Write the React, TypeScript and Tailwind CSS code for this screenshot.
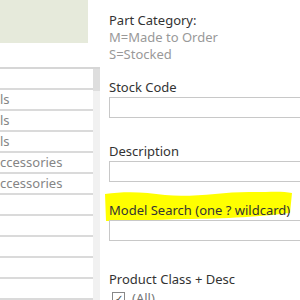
import React from 'react';

const rows = ['', 'ls', 'ls', 'ls', 'ccessories', 'ccessories', '', '', '', '', ''];

const Field = ({ label, top }: { label: string; top: string }) => (
  <div className={top}>
    <div className="text-[13px] leading-[18px] text-[#333]">{label}</div>
    <div className="mt-[1px] h-[21px] w-[220px] border border-[#c8c8c8] bg-white" />
  </div>
);

const App = () => {
  return (
    <div
      className="flex h-[300px] w-[300px] overflow-hidden bg-white"
      style={{ fontFamily: '"Noto Sans", "Open Sans", sans-serif' }}
    >
      {/* Left list */}
      <div className="flex w-[100px] shrink-0 flex-col">
        <div className="h-[44px] w-[88px] bg-[#e6eadb]" />
        <div className="mt-[24px] flex flex-1 border-t-2 border-[#d6d6d6]">
          <div className="flex-1">
            {rows.map((r, i) => (
              <div
                key={i}
                className="h-[21px] overflow-hidden whitespace-nowrap border-b-2 border-[#dadada] text-[13px] leading-[19px] text-[#858585]"
              >
                {r}
              </div>
            ))}
          </div>
          <div className="w-[7px] bg-[#f1f1f1]">
            <div className="h-[22px] bg-[#dedede]" />
          </div>
        </div>
      </div>

      {/* Right filters */}
      <div className="relative flex-1 pl-[9px] pt-[12px]">
        <div className="text-[13px] leading-[17px]">
          <div className="text-[#333]">Part Category:</div>
          <div className="text-[#999]">M=Made to Order</div>
          <div className="text-[#999]">S=Stocked</div>
        </div>

        <Field label="Stock Code" top="mt-[15px]" />
        <Field label="Description" top="mt-[24px]" />

        <div className="relative mt-[19px]">
          <svg
            className="absolute left-[-4px] top-[-11px]"
            width="190"
            height="32"
            viewBox="0 0 190 32"
          >
            <path
              d="M0 4 C20 1 40 2 60 5 C90 8 120 1 150 2 C165 2 178 1 187 3 L185 23 C160 26 120 29 80 29 C50 30 20 31 1 31 Z"
              fill="#ffff00"
            />
          </svg>
          <div className="relative">
            <div className="text-[13px] leading-[18px] text-[#333]">Model Search (one ? wildcard)</div>
            <div className="mt-[1px] h-[21px] w-[220px] border border-[#c8c8c8] bg-white" />
          </div>
        </div>

        <div className="mt-[29px] text-[13px] leading-[18px] text-[#333]">Product Class + Desc</div>
        <div className="ml-[3px] mt-[2px] flex items-center gap-[7px] text-[13px] leading-[16px] text-[#777]">
          <div className="flex h-[13px] w-[13px] items-center justify-center border border-[#888] text-[10px] leading-none text-[#444]">
            ✓
          </div>
          <span>(All)</span>
        </div>
      </div>
    </div>
  );
};

export default App;
